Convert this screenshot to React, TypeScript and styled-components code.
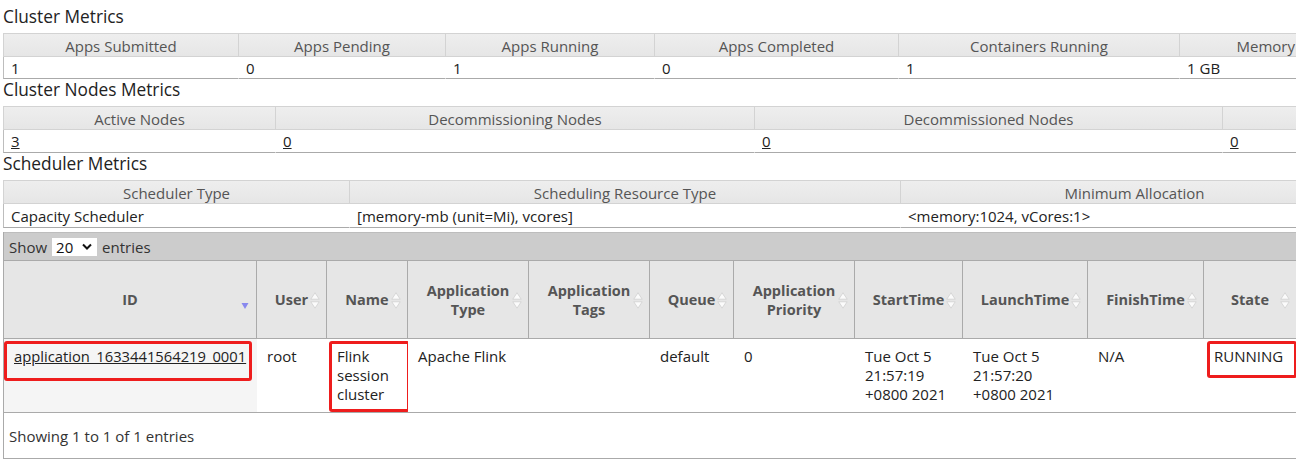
import React from "react";
import styled, { createGlobalStyle } from "styled-components";

const GlobalStyle = createGlobalStyle`
  html, body { margin: 0; padding: 0; background: #fff; overflow: hidden; }
  body {
    font-family: "Open Sans", "Noto Sans", "Liberation Sans", sans-serif;
    font-size: 15px;
    color: #222;
  }
`;

const Page = styled.div`
  width: 1700px;
  padding: 6px 0 0 3px;
  box-sizing: border-box;
`;

const Heading = styled.h3`
  margin: 0;
  padding-bottom: 6px;
  font-size: 17.3px;
  font-weight: normal;
  line-height: 21px;
  color: #222;
`;

const MetricsTable = styled.table<{ $width: number }>`
  border-collapse: separate;
  border-spacing: 0;
  table-layout: fixed;
  width: ${(p) => p.$width}px;
`;

const MetricsTh = styled.th`
  padding: 2px 0 0;
  line-height: 20px;
  font-weight: normal;
  color: #555;
  text-align: center;
  white-space: nowrap;
  overflow: hidden;
  background: linear-gradient(#eeeeee, #e6e6e6);
  border-top: 1px solid #d3d3d3;
  border-bottom: 1px solid #d3d3d3;
  border-left: 1px solid #d3d3d3;
`;

const MetricsTd = styled.td<{ $line: number }>`
  padding: 1px 0 0 7px;
  line-height: ${(p) => p.$line}px;
  text-align: left;
  white-space: nowrap;
  overflow: hidden;
  border-bottom: 1px solid #aaa;
  border-left: 1px solid transparent;
  &:first-child { border-left-color: #bdbdbd; }
`;

const Link = styled.a`
  color: #222;
  text-decoration: underline;
`;

const IdLink = styled(Link)`
  font-size: 14.75px;
`;

type Col = { title: string; width: number; value?: React.ReactNode };

const Metrics: React.FC<{ cols: Col[]; line?: number }> = ({ cols, line = 20 }) => {
  const total = cols.reduce((s, c) => s + c.width, 0);
  return (
    <MetricsTable $width={total}>
      <colgroup>
        {cols.map((c, i) => (
          <col key={i} style={{ width: c.width }} />
        ))}
      </colgroup>
      <thead>
        <tr>
          {cols.map((c, i) => (
            <MetricsTh key={i}>{c.title}</MetricsTh>
          ))}
        </tr>
      </thead>
      <tbody>
        <tr>
          {cols.map((c, i) => (
            <MetricsTd key={i} $line={line}>
              {c.value}
            </MetricsTd>
          ))}
        </tr>
      </tbody>
    </MetricsTable>
  );
};

/* ---------- Data table ---------- */

const Wrapper = styled.div`
  margin-top: 4px;
  width: 1294px;
  box-sizing: border-box;
  border-left: 1px solid #aaa;
  border-bottom: 1px solid #aaa;
`;

const Toolbar = styled.div`
  display: flex;
  align-items: center;
  gap: 5px;
  height: 27px;
  padding-left: 5px;
  background: #cccccc;
  border-top: 1px solid #bdbdbd;
  color: #333;
`;

const SelectBox = styled.span`
  display: inline-flex;
  align-items: center;
  justify-content: space-between;
  box-sizing: border-box;
  width: 45px;
  height: 18px;
  padding: 0 5px 0 4px;
  background: #fff;
  color: #111;
  font-size: 15px;
`;

const AppTable = styled.table`
  border-collapse: separate;
  border-spacing: 0;
  table-layout: fixed;
  width: 100%;
`;

const HeadCell = styled.th`
  position: relative;
  box-sizing: border-box;
  height: 79px;
  padding: 0 14px;
  background: #e6e6e6;
  color: #555;
  font-size: 14.5px;
  font-weight: bold;
  line-height: 19px;
  text-align: center;
  vertical-align: middle;
  border-top: 1px solid #aaa;
  border-bottom: 1px solid #aaa;
  border-right: 1px solid #aaa;
`;

const SortIcon = styled.svg`
  position: absolute;
  right: 6px;
  top: 50%;
  margin-top: -8px;
`;

const Cell = styled.td<{ $sorted?: boolean }>`
  position: relative;
  box-sizing: border-box;
  height: 74px;
  vertical-align: top;
  padding: 8px 4px 0 10px;
  line-height: 19px;
  background: ${(p) => (p.$sorted ? "#f5f5f5" : "#fff")};
  border-bottom: 1px solid #aaa;
  color: #222;
`;

const Mark = styled.span<{ $t: number; $l: number; $r: number; $h: number }>`
  position: absolute;
  top: ${(p) => p.$t}px;
  left: ${(p) => p.$l}px;
  right: ${(p) => p.$r}px;
  height: ${(p) => p.$h}px;
  border: 3px solid #ee1d1d;
  border-radius: 3px;
  box-sizing: border-box;
  pointer-events: none;
`;

const Footer = styled.div`
  height: 45px;
  display: flex;
  align-items: center;
  padding-left: 5px;
  color: #333;
`;

const BothSort = () => (
  <SortIcon width="10" height="17" viewBox="0 0 10 17">
    <path d="M5 0.8 L9.2 7.2 L0.8 7.2 Z" fill="#fbfbfb" stroke="#d4d4d4" strokeWidth="0.9" />
    <path d="M5 16.2 L9.2 9.8 L0.8 9.8 Z" fill="#fbfbfb" stroke="#d4d4d4" strokeWidth="0.9" />
  </SortIcon>
);

const DescSort = () => (
  <SortIcon width="10" height="17" viewBox="0 0 10 17" style={{ marginTop: -6 }}>
    <path d="M1.5 9 L8.5 9 L5 15 Z" fill="#8888ee" />
  </SortIcon>
);

const headers: { label: React.ReactNode; width: number; desc?: boolean }[] = [
  { label: "ID", width: 253, desc: true },
  { label: "User", width: 70 },
  { label: "Name", width: 81 },
  { label: <>Application<br />Type</>, width: 121 },
  { label: <>Application<br />Tags</>, width: 121 },
  { label: "Queue", width: 84 },
  { label: <>Application<br />Priority</>, width: 121 },
  { label: "StartTime", width: 108 },
  { label: "LaunchTime", width: 125 },
  { label: "FinishTime", width: 116 },
  { label: "State", width: 93 },
];

export default function App() {
  return (
    <>
      <GlobalStyle />
      <Page>
        <Heading>Cluster Metrics</Heading>
        <Metrics
          cols={[
            { title: "Apps Submitted", width: 235, value: "1" },
            { title: "Apps Pending", width: 207, value: "0" },
            { title: "Apps Running", width: 209, value: "1" },
            { title: "Apps Completed", width: 244, value: "0" },
            { title: "Containers Running", width: 281, value: "1" },
            { title: "Memory Used", width: 212, value: "1 GB" },
            { title: "Memory Total", width: 200, value: "24 GB" },
          ]}
        />
        <Heading>Cluster Nodes Metrics</Heading>
        <Metrics
          line={21}
          cols={[
            { title: "Active Nodes", width: 272, value: <Link href="#">3</Link> },
            { title: "Decommissioning Nodes", width: 479, value: <Link href="#">0</Link> },
            { title: "Decommissioned Nodes", width: 468, value: <Link href="#">0</Link> },
            { title: "Lost Nodes", width: 270, value: <Link href="#">0</Link> },
            { title: "Unhealthy Nodes", width: 200, value: <Link href="#">0</Link> },
          ]}
        />
        <Heading>Scheduler Metrics</Heading>
        <Metrics
          line={22}
          cols={[
            { title: "Scheduler Type", width: 346, value: "Capacity Scheduler" },
            { title: "Scheduling Resource Type", width: 551, value: "[memory-mb (unit=Mi), vcores]" },
            { title: "Minimum Allocation", width: 468, value: "<memory:1024, vCores:1>" },
            { title: "Maximum Allocation", width: 300, value: "<memory:8192, vCores:4>" },
          ]}
        />
        <Wrapper>
          <Toolbar>
            <span>Show</span>
            <SelectBox>
              <span>20</span>
              <svg width="10" height="7" viewBox="0 0 10 7">
                <path d="M1 1.5 L5 5.5 L9 1.5" fill="none" stroke="#111" strokeWidth="2" />
              </svg>
            </SelectBox>
            <span>entries</span>
          </Toolbar>
          <AppTable>
            <colgroup>
              {headers.map((h, i) => (
                <col key={i} style={{ width: h.width }} />
              ))}
            </colgroup>
            <thead>
              <tr>
                {headers.map((h, i) => (
                  <HeadCell key={i}>
                    {h.label}
                    {h.desc ? <DescSort /> : <BothSort />}
                  </HeadCell>
                ))}
              </tr>
            </thead>
            <tbody>
              <tr>
                <Cell $sorted>
                  <IdLink href="#">application_1633441564219_0001</IdLink>
                  <Mark $t={2} $l={0} $r={5} $h={40} />
                </Cell>
                <Cell>root</Cell>
                <Cell>
                  Flink
                  <br />
                  session
                  <br />
                  cluster
                  <Mark $t={2} $l={2} $r={-2} $h={71} />
                </Cell>
                <Cell>Apache Flink</Cell>
                <Cell></Cell>
                <Cell>default</Cell>
                <Cell>0</Cell>
                <Cell>
                  Tue Oct 5
                  <br />
                  21:57:19
                  <br />
                  +0800 2021
                </Cell>
                <Cell>
                  Tue Oct 5
                  <br />
                  21:57:20
                  <br />
                  +0800 2021
                </Cell>
                <Cell>N/A</Cell>
                <Cell>
                  RUNNING
                  <Mark $t={2} $l={3} $r={0} $h={37} />
                </Cell>
              </tr>
            </tbody>
          </AppTable>
          <Footer>Showing 1 to 1 of 1 entries</Footer>
        </Wrapper>
      </Page>
    </>
  );
}
